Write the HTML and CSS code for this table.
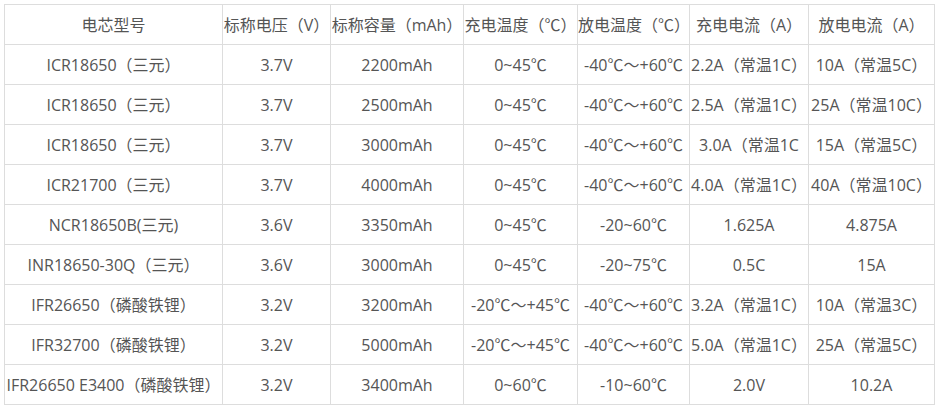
FILE: index.html
```html
<!DOCTYPE html>
<html lang="zh-CN">
<head>
<meta charset="utf-8">
<title>电芯参数</title>
<link rel="stylesheet" href="styles.css">
</head>
<body>
<table class="spec">
  <colgroup>
    <col class="c1"><col class="c2"><col class="c3"><col class="c4"><col class="c5"><col class="c6"><col class="c7">
  </colgroup>
  <thead>
    <tr><th>电芯型号</th><th>标称电压（V）</th><th>标称容量（mAh）</th><th>充电温度（℃）</th><th>放电温度（℃）</th><th>充电电流（A）</th><th>放电电流（A）</th></tr>
  </thead>
  <tbody>
    <tr><td>ICR18650（三元）</td><td>3.7V</td><td>2200mAh</td><td>0~45℃</td><td>-40℃～+60℃</td><td>2.2A（常温1C）</td><td>10A（常温5C）</td></tr>
    <tr><td>ICR18650（三元）</td><td>3.7V</td><td>2500mAh</td><td>0~45℃</td><td>-40℃～+60℃</td><td>2.5A（常温1C）</td><td>25A（常温10C）</td></tr>
    <tr><td>ICR18650（三元）</td><td>3.7V</td><td>3000mAh</td><td>0~45℃</td><td>-40℃～+60℃</td><td>3.0A（常温1C</td><td>15A（常温5C）</td></tr>
    <tr><td>ICR21700（三元）</td><td>3.7V</td><td>4000mAh</td><td>0~45℃</td><td>-40℃～+60℃</td><td>4.0A（常温1C）</td><td>40A（常温10C）</td></tr>
    <tr><td>NCR18650B(三元)</td><td>3.6V</td><td>3350mAh</td><td>0~45℃</td><td>-20~60℃</td><td>1.625A</td><td>4.875A</td></tr>
    <tr><td>INR18650-30Q（三元）</td><td>3.6V</td><td>3000mAh</td><td>0~45℃</td><td>-20~75℃</td><td>0.5C</td><td>15A</td></tr>
    <tr><td>IFR26650（磷酸铁锂）</td><td>3.2V</td><td>3200mAh</td><td>-20℃～+45℃</td><td>-40℃～+60℃</td><td>3.2A（常温1C）</td><td>10A（常温3C）</td></tr>
    <tr><td>IFR32700（磷酸铁锂）</td><td>3.2V</td><td>5000mAh</td><td>-20℃～+45℃</td><td>-40℃～+60℃</td><td>5.0A（常温1C）</td><td>25A（常温5C）</td></tr>
    <tr><td>IFR26650 E3400（磷酸铁锂）</td><td>3.2V</td><td>3400mAh</td><td>0~60℃</td><td>-10~60℃</td><td>2.0V</td><td>10.2A</td></tr>
  </tbody>
</table>
</body>
</html>
```
FILE: styles.css
```css
html, body {
  margin: 0;
  padding: 0;
  background: #fff;
}
body {
  padding: 4px;
  font-family: "Open Sans", "Noto Sans CJK SC", sans-serif;
  font-size: 16px;
  color: #555;
}
.spec {
  border-collapse: collapse;
  table-layout: fixed;
  width: 930px;
}
.c1 { width: 218px; }
.c2 { width: 108px; }
.c3 { width: 133px; }
.c4 { width: 114px; }
.c5 { width: 112px; }
.c6 { width: 119px; }
.c7 { width: 126px; }
.spec th,
.spec td {
  border: 1px solid #ddd;
  height: 39px;
  padding: 0;
  text-align: center;
  vertical-align: middle;
  font-weight: normal;
  white-space: nowrap;
  overflow: visible;
  line-height: 20px;
}
```
